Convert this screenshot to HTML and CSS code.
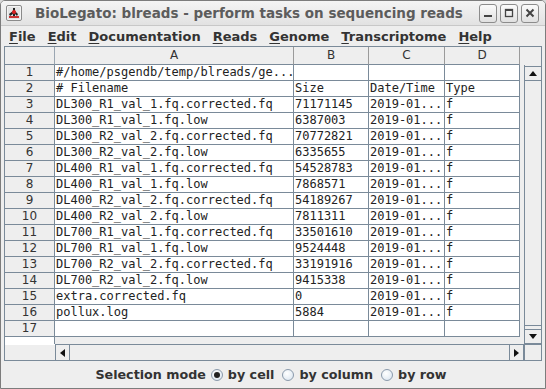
FILE: index.html
```html
<!DOCTYPE html>
<html>
<head>
<meta charset="utf-8">
<link rel="stylesheet" href="styles.css">
</head>
<body>
<div class="window">
  <div class="titlebar">
    <svg class="appicon" width="16" height="16" viewBox="0 0 16 16">
      <rect x="0.5" y="0.5" width="15" height="15" rx="1.5" fill="#f4f4f4" stroke="#8a8a8a"/>
      <rect x="2" y="2" width="12" height="12" fill="#e4e4e4"/>
      <path d="M7 3 L9 3 L9 6 L12 9 L11 11 L9 9 L9 11 L7 11 L7 9 L4 11 L3 9 L7 6 Z" fill="#222"/>
      <circle cx="8" cy="7" r="2" fill="#d22"/>
      <rect x="3" y="11" width="10" height="2" fill="#c33"/>
    </svg>
    <span class="title">BioLegato: blreads - perform tasks on sequencing reads</span>
    <div class="wbtns">
      <span class="wbtn"><svg width="10" height="10" viewBox="0 0 10 10"><rect x="1" y="7" width="8" height="2" fill="#444"/></svg></span>
      <span class="wbtn"><svg width="10" height="10" viewBox="0 0 10 10"><rect x="1.5" y="1.5" width="7" height="7" fill="none" stroke="#444" stroke-width="1.3"/><rect x="1" y="1" width="8" height="2" fill="#444"/></svg></span>
      <span class="wbtn"><svg width="10" height="10" viewBox="0 0 10 10"><path d="M1.5 1.5 L8.5 8.5 M8.5 1.5 L1.5 8.5" stroke="#444" stroke-width="2"/></svg></span>
    </div>
  </div>
  <div class="menubar">
    <span class="menu"><u>F</u>ile</span>
    <span class="menu"><u>E</u>dit</span>
    <span class="menu"><u>D</u>ocumentation</span>
    <span class="menu"><u>R</u>eads</span>
    <span class="menu"><u>G</u>enome</span>
    <span class="menu"><u>T</u>ranscriptome</span>
    <span class="menu"><u>H</u>elp</span>
  </div>
  <div class="main">
    <div class="pane">
      <div class="corner"></div>
      <div class="colhdr">
        <div class="hc ca">A</div><div class="hc cb">B</div><div class="hc cc">C</div><div class="hc cd">D</div>
      </div>
      <div class="ur"></div>
      <div class="rowhdr">
        <div class="rh">1</div><div class="rh">2</div><div class="rh">3</div><div class="rh">4</div>
        <div class="rh">5</div><div class="rh">6</div><div class="rh">7</div><div class="rh">8</div>
        <div class="rh">9</div><div class="rh">10</div><div class="rh">11</div><div class="rh">12</div>
        <div class="rh">13</div><div class="rh">14</div><div class="rh">15</div><div class="rh">16</div>
        <div class="rh">17</div>
      </div>
      <div class="viewport">
        <div class="tbl">
          <div class="tr"><div class="td ca">#/home/psgendb/temp/blreads/ge...</div><div class="td cb"></div><div class="td cc"></div><div class="td cd"></div></div>
          <div class="tr"><div class="td ca"># Filename</div><div class="td cb">Size</div><div class="td cc">Date/Time</div><div class="td cd">Type</div></div>
          <div class="tr"><div class="td ca">DL300_R1_val_1.fq.corrected.fq</div><div class="td cb">71171145</div><div class="td cc">2019-01...</div><div class="td cd">f</div></div>
          <div class="tr"><div class="td ca">DL300_R1_val_1.fq.low</div><div class="td cb">6387003</div><div class="td cc">2019-01...</div><div class="td cd">f</div></div>
          <div class="tr"><div class="td ca">DL300_R2_val_2.fq.corrected.fq</div><div class="td cb">70772821</div><div class="td cc">2019-01...</div><div class="td cd">f</div></div>
          <div class="tr"><div class="td ca">DL300_R2_val_2.fq.low</div><div class="td cb">6335655</div><div class="td cc">2019-01...</div><div class="td cd">f</div></div>
          <div class="tr"><div class="td ca">DL400_R1_val_1.fq.corrected.fq</div><div class="td cb">54528783</div><div class="td cc">2019-01...</div><div class="td cd">f</div></div>
          <div class="tr"><div class="td ca">DL400_R1_val_1.fq.low</div><div class="td cb">7868571</div><div class="td cc">2019-01...</div><div class="td cd">f</div></div>
          <div class="tr"><div class="td ca">DL400_R2_val_2.fq.corrected.fq</div><div class="td cb">54189267</div><div class="td cc">2019-01...</div><div class="td cd">f</div></div>
          <div class="tr"><div class="td ca">DL400_R2_val_2.fq.low</div><div class="td cb">7811311</div><div class="td cc">2019-01...</div><div class="td cd">f</div></div>
          <div class="tr"><div class="td ca">DL700_R1_val_1.fq.corrected.fq</div><div class="td cb">33501610</div><div class="td cc">2019-01...</div><div class="td cd">f</div></div>
          <div class="tr"><div class="td ca">DL700_R1_val_1.fq.low</div><div class="td cb">9524448</div><div class="td cc">2019-01...</div><div class="td cd">f</div></div>
          <div class="tr"><div class="td ca">DL700_R2_val_2.fq.corrected.fq</div><div class="td cb">33191916</div><div class="td cc">2019-01...</div><div class="td cd">f</div></div>
          <div class="tr"><div class="td ca">DL700_R2_val_2.fq.low</div><div class="td cb">9415338</div><div class="td cc">2019-01...</div><div class="td cd">f</div></div>
          <div class="tr"><div class="td ca">extra.corrected.fq</div><div class="td cb">0</div><div class="td cc">2019-01...</div><div class="td cd">f</div></div>
          <div class="tr"><div class="td ca">pollux.log</div><div class="td cb">5884</div><div class="td cc">2019-01...</div><div class="td cd">f</div></div>
          <div class="tr"><div class="td ca"></div><div class="td cb"></div><div class="td cc"></div><div class="td cd"></div></div>
        </div>
      </div>
      <div class="vscroll">
        <div class="sbtn"><svg width="8" height="5" viewBox="0 0 8 5"><path d="M0 5 L4 0 L8 5 Z" fill="#111"/></svg></div>
        <div class="vthumb"></div>
        <div class="sbtn"><svg width="8" height="5" viewBox="0 0 8 5"><path d="M0 0 L8 0 L4 5 Z" fill="#111"/></svg></div>
      </div>
      <div class="ll"></div>
      <div class="hscroll">
        <div class="sbtn"><svg width="5" height="8" viewBox="0 0 5 8"><path d="M5 0 L5 8 L0 4 Z" fill="#111"/></svg></div>
        <div class="hthumb"></div>
        <div class="sbtn"><svg width="5" height="8" viewBox="0 0 5 8"><path d="M0 0 L5 4 L0 8 Z" fill="#111"/></svg></div>
      </div>
      <div class="lr"></div>
    </div>
  </div>
  <div class="radiobar">
    <span class="lbl">Selection mode</span>
    <span class="opt"><span class="radio on"></span>by cell</span>
    <span class="opt"><span class="radio"></span>by column</span>
    <span class="opt"><span class="radio"></span>by row</span>
  </div>
</div>
</body>
</html>
```
FILE: styles.css
```css
* { box-sizing: border-box; }
html, body { margin: 0; padding: 0; }
body {
  width: 546px; height: 389px; overflow: hidden;
  background: #d8d8d8;
  font-family: "DejaVu Sans", sans-serif;
}
.window {
  width: 546px; height: 389px;
  border: 1px solid #7c7c7c;
  border-radius: 5px 5px 0 0;
  background: #eeeeee;
  display: flex; flex-direction: column;
  overflow: hidden;
}
.titlebar {
  height: 25px; flex: none;
  display: flex; align-items: center;
  padding: 0 6px 0 5px;
  background: linear-gradient(#f4f4f4, #e2e2e2);
  border-bottom: 1px solid #c8c8c8;
}
.appicon { flex: none; margin-right: 13px; }
.title {
  font-weight: bold; font-size: 13.5px; color: #5c5c5c;
  white-space: nowrap; flex: 1;
}
.wbtns { display: flex; gap: 3px; }
.wbtn {
  width: 18px; height: 19px;
  border: 1px solid #8c8c8c; border-radius: 3px;
  background: linear-gradient(#fbfbfb, #e0e0e0);
  display: flex; align-items: center; justify-content: center;
}
.menubar {
  height: 20px; flex: none;
  display: flex; align-items: center;
  padding-left: 2px;
  background: #eeeeee;
}
.menu {
  font-weight: bold; font-size: 13px; color: #333333;
  padding: 0 6px;
  white-space: nowrap;
}
.menu u { text-decoration-thickness: 1px; text-underline-offset: 2px; }
.main { padding: 0 3px; flex: none; }
.pane {
  height: 315px;
  border: 1px solid #7a8a99;
  display: grid;
  grid-template-columns: 50px 469px 17px;
  grid-template-rows: 18px 279px 16px;
  background: #eeeeee;
}
.corner {
  background: #eeeeee;
  border-right: 1px solid #9aa6b2;
  border-bottom: 1px solid #7a8a99;
}
.colhdr { display: flex; background: #eeeeee; }
.hc {
  height: 18px;
  border-right: 1px solid #9a9a9a;
  border-bottom: 1px solid #7a8a99;
  font-size: 12px; color: #333;
  text-align: center; line-height: 17px;
}
.ca { width: 239px; }
.cb { width: 75px; }
.cc { width: 76px; }
.cd { width: 75px; }
.ur { background: #eeeeee; }
.rowhdr { background: #ffffff; border-right: 1px solid #7a8a99; }
.rh {
  height: 16px;
  background: #eeeeee;
  border-bottom: 1px solid #7a8a99;
  font-size: 12px; color: #333;
  text-align: center; line-height: 15px;
}
.viewport { background: #eeeeee; overflow: hidden; }
.tbl { width: 465px; background: #ffffff; }
.tr { display: flex; height: 16px; }
.td {
  height: 16px;
  border-right: 1px solid #7a8a99;
  border-bottom: 1px solid #7a8a99;
  font-family: "DejaVu Sans Mono", monospace;
  font-size: 12px; color: #222;
  line-height: 15px;
  padding-left: 1px;
  white-space: nowrap; overflow: hidden;
}
.vscroll {
  display: flex; flex-direction: column;
  border-left: 1px solid #7a8a99;
  background: #eeeeee;
  padding-top: 1px;
}
.vscroll .sbtn {
  height: 15px; flex: none;
  border: 1px solid #7a8a99; border-left: none; border-right: none;
  display: flex; align-items: center; justify-content: center;
  background: #eeeeee;
}
.vthumb {
  flex: 1; margin: 0 0 3px 0;
  border-bottom: 1px solid #7a8a99;
  background: #eeeeee;
}
.hscroll {
  display: flex;
  border-top: 1px solid #7a8a99;
  background: #eeeeee;
}
.hscroll .sbtn {
  width: 15px; flex: none;
  border-left: 1px solid #7a8a99; border-right: 1px solid #7a8a99;
  display: flex; align-items: center; justify-content: center;
}
.hthumb { flex: 1; background: #eeeeee; }
.ll { background: #eeeeee; border-top: 1px solid #ffffff; }
.lr { background: #eeeeee; border-left: 1px solid #7a8a99; border-top: 1px solid #7a8a99; }
.radiobar {
  flex: 1;
  display: flex; align-items: center; justify-content: center;
  font-weight: bold; font-size: 12.7px; color: #333;
  padding-right: 4px;
}
.lbl { margin-right: 5px; }
.opt { display: flex; align-items: center; margin-right: 8px; }
.opt:last-child { margin-right: 0; }
.radio {
  width: 12px; height: 12px; border-radius: 50%;
  border: 1px solid #8a9aab;
  background: radial-gradient(circle at 40% 35%, #ffffff, #d6e2ee);
  margin-right: 5px; position: relative;
}
.radio.on::after {
  content: ""; position: absolute; left: 2px; top: 2px;
  width: 6px; height: 6px; border-radius: 50%; background: #222;
}
```
